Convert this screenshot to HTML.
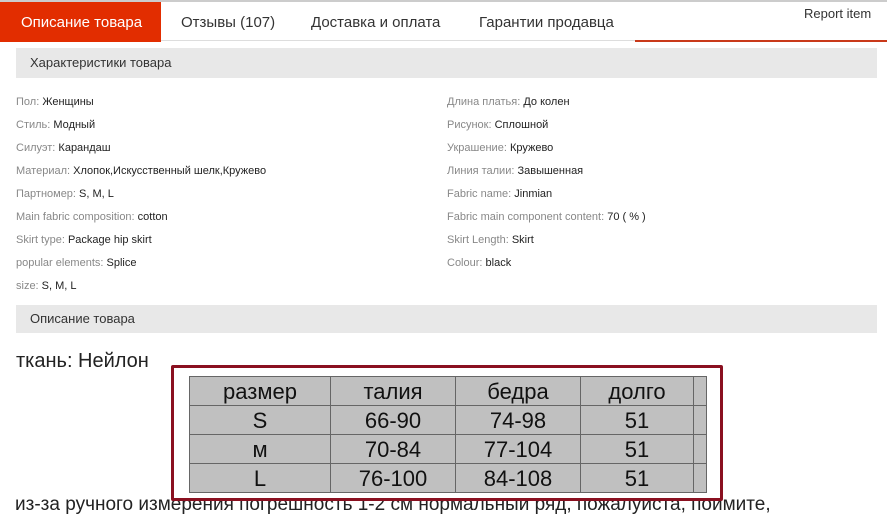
<!DOCTYPE html>
<html><head><meta charset="utf-8">
<style>
*{margin:0;padding:0;box-sizing:border-box}
body{width:887px;height:524px;overflow:hidden;background:#fff;font-family:"Liberation Sans","Noto Sans CJK SC",sans-serif;color:#222;position:relative}
.abs{position:absolute;white-space:nowrap}
.topline{position:absolute;left:0;top:0;width:887px;height:2px;background:#ccc}
.tab{position:absolute;top:3px;height:39px;line-height:39px;font-size:15px;color:#333}
.hdr{position:absolute;left:16px;width:861px;background:#e8e8e8;font-size:13px;color:#333;padding-left:14px}
.r{position:absolute;font-size:11px;color:#222;white-space:nowrap}
.r span{color:#888}
table{border-collapse:collapse;position:absolute;left:189px;top:376px;background:#c0c0c0}
td{border:1px solid #666;height:29px;font-size:22px;text-align:center;color:#111;padding:0;line-height:27px}
</style></head><body>
<div class="topline"></div>
<div class="abs" style="left:0;top:2px;width:161px;height:40px;background:#e22d00"></div>
<div class="tab" style="left:21px;color:#fff">Описание товара</div>
<div class="tab" style="left:181px">Отзывы (107)</div>
<div class="tab" style="left:311px">Доставка и оплата</div>
<div class="tab" style="left:479px">Гарантии продавца</div>
<div class="abs" style="left:161px;top:40px;width:474px;height:1px;background:#ddd"></div>
<div class="abs" style="left:635px;top:40px;width:252px;height:2px;background:#c9391a"></div>
<div class="abs" style="left:804px;top:6px;font-size:13px;color:#333">Report item</div>

<div class="hdr" style="top:48px;height:30px;line-height:30px">Характеристики товара</div>
<div class="r" style="left:16px;top:96px"><span>Пол:</span> Женщины</div>
<div class="r" style="left:16px;top:119px"><span>Стиль:</span> Модный</div>
<div class="r" style="left:16px;top:142px"><span>Силуэт:</span> Карандаш</div>
<div class="r" style="left:16px;top:165px"><span>Материал:</span> Хлопок,Искусственный шелк,Кружево</div>
<div class="r" style="left:16px;top:188px"><span>Партномер:</span> S, M, L</div>
<div class="r" style="left:16px;top:211px"><span>Main fabric composition:</span> cotton</div>
<div class="r" style="left:16px;top:234px"><span>Skirt type:</span> Package hip skirt</div>
<div class="r" style="left:16px;top:257px"><span>popular elements:</span> Splice</div>
<div class="r" style="left:16px;top:280px"><span>size:</span> S, M, L</div>
<div class="r" style="left:447px;top:96px"><span>Длина платья:</span> До колен</div>
<div class="r" style="left:447px;top:119px"><span>Рисунок:</span> Сплошной</div>
<div class="r" style="left:447px;top:142px"><span>Украшение:</span> Кружево</div>
<div class="r" style="left:447px;top:165px"><span>Линия талии:</span> Завышенная</div>
<div class="r" style="left:447px;top:188px"><span>Fabric name:</span> Jinmian</div>
<div class="r" style="left:447px;top:211px"><span>Fabric main component content:</span> 70 ( % )</div>
<div class="r" style="left:447px;top:234px"><span>Skirt Length:</span> Skirt</div>
<div class="r" style="left:447px;top:257px"><span>Colour:</span> black</div>

<div class="hdr" style="top:305px;height:28px;line-height:28px">Описание товара</div>
<div class="abs" style="left:16px;top:350px;font-size:20px;color:#222">ткань: Нейлон</div>
<div class="abs" style="left:15px;top:494px;font-size:19px;color:#222">из-за ручного измерения погрешность 1-2 см нормальный ряд, пожалуйста, поймите,</div>
<div class="abs" style="left:171px;top:365px;width:552px;height:136px;border:3px solid #8a1020;background:#fff;border-radius:2px"></div>
<table>
<tr><td style="width:141px">размер</td><td style="width:125px">талия</td><td style="width:125px">бедра</td><td style="width:113px">долго</td><td style="width:13px"></td></tr>
<tr><td>S</td><td>66-90</td><td>74-98</td><td>51</td><td></td></tr>
<tr><td>м</td><td>70-84</td><td>77-104</td><td>51</td><td></td></tr>
<tr><td>L</td><td>76-100</td><td>84-108</td><td>51</td><td></td></tr>
</table>
</body></html>
